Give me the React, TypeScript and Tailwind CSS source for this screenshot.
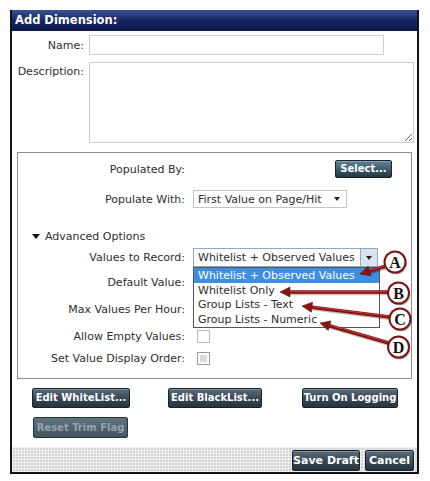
import React from "react";

const btn =
  "flex items-center justify-center whitespace-nowrap rounded-[2px] border border-[#18222b] bg-gradient-to-b from-[#5a6d7b] via-[#3a4a57] to-[#27343e] text-white font-bold text-[10px] shadow-[inset_0_1px_0_rgba(255,255,255,0.25)]";

const Label = ({ children }: { children: React.ReactNode }) => (
  <div className="w-[167px] shrink-0 text-right whitespace-nowrap">{children}</div>
);

const Checkbox = ({ filled }: { filled?: boolean }) => (
  <div
    className={
      filled
        ? "ml-[4px] w-[13px] h-[13px] border border-[#9a9a9a] bg-white p-[2px]"
        : "ml-[4px] w-[13px] h-[13px] border border-[#bdbdbd] bg-white"
    }
  >
    {filled && <div className="w-full h-full bg-[#d9d9d9]" />}
  </div>
);

type Callout = {
  letter: string;
  cx: number;
  cy: number;
  tail: [number, number];
  tip: [number, number];
};

const callouts: Callout[] = [
  { letter: "A", cx: 395, cy: 262, tail: [386, 266], tip: [360, 274] },
  { letter: "B", cx: 398.5, cy: 293, tail: [388, 292], tip: [280, 292] },
  { letter: "C", cx: 400, cy: 319, tail: [390, 317], tip: [302, 306] },
  { letter: "D", cx: 398.5, cy: 347, tail: [389, 343], tip: [320, 323] },
];

function head(tail: [number, number], tip: [number, number]) {
  const dx = tip[0] - tail[0];
  const dy = tip[1] - tail[1];
  const len = Math.hypot(dx, dy);
  const ux = dx / len;
  const uy = dy / len;
  const bx = tip[0] - ux * 10;
  const by = tip[1] - uy * 10;
  const nx = -uy * 5;
  const ny = ux * 5;
  return `${tip[0]},${tip[1]} ${bx + nx},${by + ny} ${bx - nx},${by - ny}`;
}

function Annotations() {
  return (
    <svg
      className="absolute left-0 top-0 z-20 pointer-events-none"
      width={430}
      height={481}
      viewBox="0 0 430 481"
    >
      {callouts.map((c) => {
        const dx = c.tip[0] - c.tail[0];
        const dy = c.tip[1] - c.tail[1];
        const len = Math.hypot(dx, dy);
        const ex = c.tip[0] - (dx / len) * 8;
        const ey = c.tip[1] - (dy / len) * 8;
        return (
          <g key={c.letter}>
            <line x1={c.tail[0] + 1} y1={c.tail[1] + 1.5} x2={ex + 1} y2={ey + 1.5} stroke="rgba(0,0,0,0.25)" strokeWidth={3.5} />
            <line x1={c.tail[0]} y1={c.tail[1]} x2={ex} y2={ey} stroke="#7e1212" strokeWidth={3.5} />
            <line x1={c.tail[0]} y1={c.tail[1] - 0.6} x2={ex} y2={ey - 0.6} stroke="#c8403a" strokeWidth={1} />
            <polygon points={head(c.tail, c.tip)} fill="#8a1414" stroke="#5e0c0c" strokeWidth={0.6} />
            <circle cx={c.cx + 1} cy={c.cy + 1.5} r={11} fill="rgba(0,0,0,0.3)" />
            <circle cx={c.cx} cy={c.cy} r={10.5} fill="#fff" stroke="#7e1212" strokeWidth={2} />
            <text
              x={c.cx}
              y={c.cy + 5.5}
              textAnchor="middle"
              fontFamily="'Liberation Serif', serif"
              fontWeight="bold"
              fontSize={16}
              fill="#111"
            >
              {c.letter}
            </text>
          </g>
        );
      })}
    </svg>
  );
}

export default function App() {
  return (
    <div className="relative w-[430px] h-[481px] bg-white pt-[10px] pl-[10px] font-['DejaVu_Sans',sans-serif] text-[11px] text-[#2e2e2e] leading-none">
      <div className="w-[409px] h-[464px] flex flex-col border-x-2 border-b-2 border-[#141414]">
        <div className="h-[21px] shrink-0 flex items-center pl-[3px] bg-gradient-to-b from-[#3b5191] via-[#162763] to-[#0b1644] text-white font-bold text-[11.5px]">
          Add Dimension:
        </div>

        <div className="flex-1 flex flex-col bg-white">
          <div className="mt-[4px] flex h-[20px] items-center">
            <div className="w-[72px] text-right whitespace-nowrap">Name:</div>
            <div className="ml-[5px] w-[295px] h-[20px] border border-[#cfcfcf] bg-white" />
          </div>

          <div className="mt-[7px] flex">
            <div className="w-[72px] text-right whitespace-nowrap pt-[4px]">Description:</div>
            <textarea className="ml-[5px] w-[325px] h-[81px] border border-[#cfcfcf] bg-white outline-none" />
          </div>

          <div className="mt-[9px] ml-[5px] w-[395px] h-[227px] shrink-0 border border-[#8e8e8e] flex flex-col">
            <div className="mt-[7px] h-[18px] flex items-center">
              <Label>Populated By:</Label>
              <div className={`${btn} ml-[150px] w-[57px] h-[18px] from-[#5f8296] via-[#3f5f72] to-[#2a4556] border-[#1a2c38]`}>
                Select...
              </div>
            </div>

            <div className="mt-[12px] h-[18px] flex items-center">
              <Label>Populate With:</Label>
              <div className="ml-[8px] w-[154px] h-[18px] border border-[#c4c4c4] flex items-center pl-[4px] pr-[6px] justify-between whitespace-nowrap">
                <span>First Value on Page/Hit</span>
                <span className="w-0 h-0 border-x-[3.5px] border-x-transparent border-t-[4px] border-t-[#222]" />
              </div>
            </div>

            <div className="mt-[21px] h-[14px] flex items-center">
              <span className="ml-[14px] w-0 h-0 border-x-[4.5px] border-x-transparent border-t-[5px] border-t-[#111]" />
              <span className="ml-[5px]">Advanced Options</span>
            </div>

            <div className="mt-[5px] h-[19px] flex items-center">
              <Label>Values to Record:</Label>
              <div className="relative ml-[8px] w-[185px] h-[19px] border border-[#8fa9c2] flex items-center whitespace-nowrap">
                <span className="pl-[4px] flex-1">Whitelist + Observed Values</span>
                <div className="w-[17px] h-full border-l border-[#8fa9c2] bg-[#d9e4ee] flex items-center justify-center">
                  <span className="w-0 h-0 border-x-[3.5px] border-x-transparent border-t-[4px] border-t-[#222]" />
                </div>
                <div className="absolute left-[-1px] top-[18px] w-[187px] h-[61px] border border-[#555] bg-white flex flex-col z-10">
                  <div className="h-[15px] bg-[#3f8ee0] text-white flex items-center pl-[4px]">
                    Whitelist + Observed Values
                  </div>
                  <div className="h-[15px] flex items-center pl-[4px]">Whitelist Only</div>
                  <div className="h-[15px] flex items-center pl-[4px]">Group Lists - Text</div>
                  <div className="h-[15px] flex items-center pl-[4px]">Group Lists - Numeric</div>
                </div>
              </div>
            </div>

            <div className="mt-[7px] h-[16px] flex items-center">
              <Label>Default Value:</Label>
            </div>

            <div className="mt-[11px] h-[16px] flex items-center">
              <Label>Max Values Per Hour:</Label>
            </div>

            <div className="mt-[11px] h-[16px] flex items-center">
              <Label>Allow Empty Values:</Label>
              <div className="ml-[8px]">
                <Checkbox />
              </div>
            </div>

            <div className="mt-[6px] h-[16px] flex items-center">
              <Label>Set Value Display Order:</Label>
              <div className="ml-[8px]">
                <Checkbox filled />
              </div>
            </div>
          </div>

          <div className="mt-[9px] h-[20px] flex">
            <div className={`${btn} ml-[20px] w-[98px] h-[20px]`}>Edit WhiteList...</div>
            <div className={`${btn} ml-[38px] w-[94px] h-[20px]`}>Edit BlackList...</div>
            <div className={`${btn} ml-[40px] w-[96px] h-[20px]`}>Turn On Logging</div>
          </div>

          <div className="mt-[9px] h-[21px] flex">
            <div className="ml-[21px] w-[95px] h-[21px] flex items-center justify-center rounded-[2px] border border-[#26323b] bg-gradient-to-b from-[#607380] to-[#44555f] text-[#92a3ad] font-bold text-[10px]">
              Reset Trim Flag
            </div>
          </div>

          <div className="mt-[9px] flex-1 flex justify-end items-start pt-[3px] pr-[3px] gap-[5px] bg-[#d4d4d4] bg-[linear-gradient(90deg,rgba(255,255,255,0.55)_1px,transparent_1px),linear-gradient(rgba(255,255,255,0.55)_1px,transparent_1px)] bg-size-[3px_3px]">
            <div className={`${btn} w-[68px] h-[21px] text-[11px]`}>Save Draft</div>
            <div className={`${btn} w-[49px] h-[21px] text-[11px]`}>Cancel</div>
          </div>
        </div>
      </div>
      <Annotations />
    </div>
  );
}
